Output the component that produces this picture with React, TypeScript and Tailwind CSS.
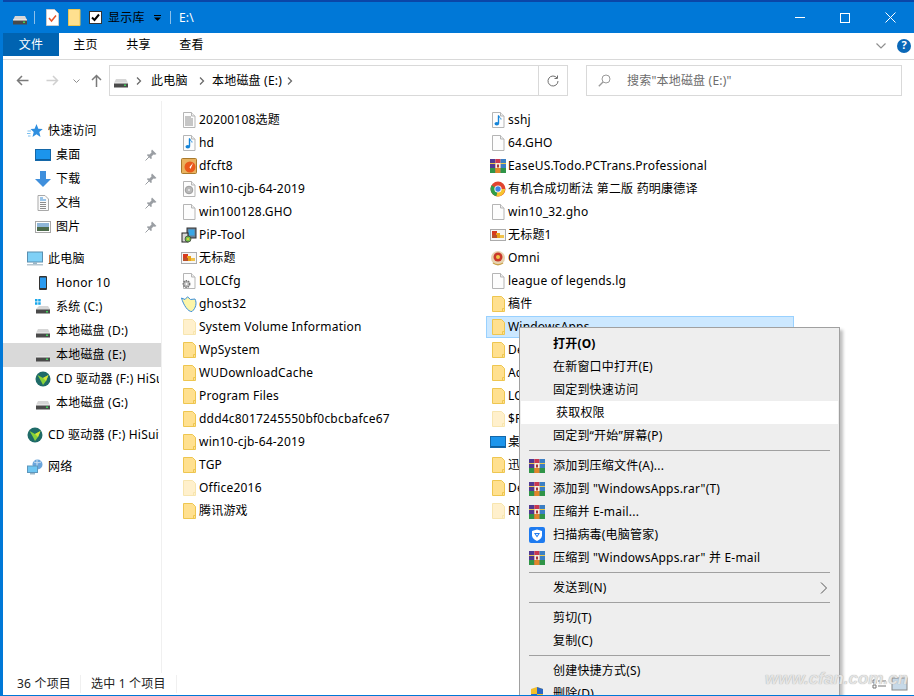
import type { ReactNode } from "react";

const Drive = ({ size = 16 }: { size?: number }) => (
  <svg width={size} height={size} viewBox="0 0 16 16">
    <path d="M3 6h10l2 4v4H1v-4z" fill="#d6d6d6" />
    <rect x="1" y="10" width="14" height="4.500" fill="#4a4a4a" />
    <rect x="1" y="9.500" width="14" height="1" fill="#f4f4f4" />
    <rect x="11" y="11.500" width="2" height="1.500" fill="#3fd05a" />
  </svg>
);

const Folder = ({ faded = false }: { faded?: boolean }) => (
  <svg width={16} height={16} viewBox="0 0 16 16" opacity={faded ? 0.45 : 1}>
    <path d="M2.500 .5h9l3 3v12h-12z" fill="#ffe08f" stroke="#eec650" />
    <path d="M12.500 15.500v-3h2" fill="none" stroke="#eec650" />
  </svg>
);

const PageBase = ({ children }: { children?: ReactNode }) => (
  <svg width={16} height={16} viewBox="0 0 16 16">
    <path d="M2.500 .5h8l3.500 3.500v11.500H2.500z" fill="#fdfdfd" stroke="#b5b5b5" />
    <path d="M10.500 .5v3.500H14" fill="#eee" stroke="#b5b5b5" />
    {children}
  </svg>
);

const TextDoc = () => (
  <PageBase>
    <path d="M4 5h6M4 7h8M4 9h8M4 11h8M4 13h8" stroke="#8f8f8f" />
  </PageBase>
);

const MusicDoc = () => (
  <PageBase>
    <path d="M8.500 3.500v8" stroke="#1584d8" strokeWidth="1.400" />
    <path d="M8.500 3.500c.5 2 2.500 2 2.500 4" stroke="#1584d8" fill="none" />
    <ellipse cx="6.800" cy="11.700" rx="2.300" ry="1.800" fill="#1584d8" />
  </PageBase>
);

const DiscDoc = () => (
  <PageBase>
    <circle cx="8" cy="9" r="3.800" fill="#b9b9b9" stroke="#9d9d9d" />
    <circle cx="8" cy="9" r="1" fill="#eee" />
  </PageBase>
);

const GearDoc = () => (
  <PageBase>
    <circle cx="5.500" cy="11" r="3.200" fill="#bbb" stroke="#777" strokeDasharray="1.500 .8" strokeWidth="1.500" />
    <circle cx="5.500" cy="11" r="1" fill="#fff" />
  </PageBase>
);

const PictureIcon = () => (
  <svg width={16} height={16} viewBox="0 0 16 16">
    <rect x=".5" y="2.500" width="15" height="11" fill="#f6f6f6" stroke="#ababab" />
    <rect x="2" y="4" width="5" height="4" fill="#d63a1e" />
    <rect x="6" y="6" width="4" height="5" fill="#e8a21d" />
    <rect x="2" y="8" width="5" height="3" fill="#b9502a" />
    <rect x="10" y="8" width="4" height="3" fill="#f0c24a" />
  </svg>
);

const BoxApp = () => (
  <svg width={16} height={16} viewBox="0 0 16 16">
    <rect x=".5" y=".5" width="15" height="15" rx="1" fill="#e9b25f" stroke="#a97a2c" />
    <circle cx="9" cy="9" r="5.500" fill="#ea5a1c" />
    <path d="M6 12 12 5 9.500 11 8.500 9z" fill="#fff" />
  </svg>
);

const Installer = () => (
  <svg width={16} height={16} viewBox="0 0 16 16">
    <rect x="6" y="1" width="9" height="10" fill="#6d7f93" stroke="#333" />
    <rect x="7.500" y="2.500" width="6" height="6" fill="#39a7e6" />
    <rect x="1" y="6" width="6" height="9" fill="#d8d8d8" stroke="#222" />
    <circle cx="7" cy="12" r="3" fill="#78c24a" stroke="#333" strokeWidth=".7" />
    <circle cx="7" cy="12" r="1" fill="#f3d13c" />
  </svg>
);

const Ghost = () => (
  <svg width={16} height={16} viewBox="0 0 16 16">
    <path d="M.5 2 4 3.500 6.500 .8 9.500 3.500 14 3c2 4 1 9-3 12.500C7 16 2.500 9 .5 2z" fill="#fcf5a8" stroke="#3b8fd8" />
  </svg>
);

const WinRar = () => (
  <svg width={16} height={16} viewBox="0 0 16 16">
    <rect x="0" y="1" width="5.400" height="14" fill="#4f3a92" />
    <rect x="5.400" y="1" width="5.200" height="14" fill="#c9384f" />
    <rect x="10.600" y="1" width="5.400" height="14" fill="#3b7fc4" />
    <rect x="0" y="10" width="5.400" height="5" fill="#2f9447" />
    <rect x="5.400" y="10" width="5.200" height="5" fill="#e0862a" />
    <rect x="10.600" y="10" width="5.400" height="5" fill="#2f9447" />
    <rect x="0" y="5" width="16" height="1" fill="#e9c84e" />
    <rect x="5.500" y="5" width="5" height="5" fill="#f4f0e2" />
    <rect x="7" y="6.500" width="2" height="3" fill="#a33" />
  </svg>
);

const ChromeIcon = () => (
  <svg width={16} height={16} viewBox="0 0 16 16">
    <circle cx="8" cy="8" r="7.500" fill="#e0442f" />
    <path d="M8 8 1.500 4.200A7.500 7.500 0 0 0 6.500 15.300z" fill="#2f9e49" />
    <path d="M8 8h7.200a7.500 7.500 0 0 1-8.700 7.300z" fill="#f6c42e" />
    <circle cx="8" cy="8" r="3.600" fill="#fff" />
    <circle cx="8" cy="8" r="2.700" fill="#3b83e6" />
  </svg>
);

const Emblem = () => (
  <svg width={16} height={16} viewBox="0 0 16 16">
    <circle cx="8" cy="8" r="7" fill="#e7d3b0" />
    <circle cx="8" cy="7" r="4.500" fill="#c9382a" />
    <circle cx="8" cy="7" r="2" fill="#f1c64a" />
    <path d="M3 13c3 2 7 2 10 0" stroke="#c9a24a" strokeWidth="1.500" fill="none" />
  </svg>
);

const DesktopIcon = () => (
  <svg width={16} height={16} viewBox="0 0 16 16">
    <rect x=".5" y="2.500" width="15" height="11" fill="#1c95ec" stroke="#1467a8" />
    <rect x="1" y="12" width="14" height="1" fill="#0e5f9e" />
  </svg>
);

const DownloadIcon = () => (
  <svg width={16} height={16} viewBox="0 0 16 16">
    <path d="M5 0h6v8h5l-8 8-8-8h5z" fill="#3f8fdc" />
  </svg>
);

const DocsIcon = () => (
  <svg width={16} height={16} viewBox="0 0 16 16">
    <path d="M3 .5h7l3.500 3.500v11.500H3z" fill="#fafafa" stroke="#a9a9a9" />
    <path d="M5 3h3M5 5h6" stroke="#3b8fd8" />
    <path d="M5 7.500h6M5 9.500h6M5 11.500h6M5 13.500h6" stroke="#8c8c8c" />
  </svg>
);

const PicturesIcon = () => (
  <svg width={16} height={16} viewBox="0 0 16 16">
    <rect x=".5" y="2.500" width="15" height="11" fill="#fff" stroke="#a8a8a8" />
    <rect x="2" y="4" width="12" height="4" fill="#8fb6d8" />
    <rect x="2" y="8" width="12" height="4" fill="#4d6b4b" />
  </svg>
);

const StarIcon = () => (
  <svg width={16} height={16} viewBox="0 0 16 16">
    <path d="M9.500 1 11.300 5.800 15.800 6 12.300 9 13.500 14 9.500 11.200 5.500 14 6.700 9 3.500 6 7.600 5.800z" fill="#2f8fe0" />
    <path d="M.5 8H4M0 10.500h3.500M1 13h2.500" stroke="#7cc0ef" />
  </svg>
);

const ComputerIcon = () => (
  <svg width={16} height={16} viewBox="0 0 16 16">
    <rect x=".5" y="1" width="15" height="10" fill="#7fd0f6" stroke="#5a8fb0" />
    <rect x="6" y="11" width="4" height="2" fill="#9ab7c8" />
    <rect x="0" y="13" width="16" height="1.500" fill="#b6c6d0" />
  </svg>
);

const PhoneIcon = () => (
  <svg width={16} height={16} viewBox="0 0 16 16">
    <rect x="4" y="1" width="8" height="14" rx="1" fill="#333" />
    <rect x="5" y="2.500" width="6" height="10.500" fill="#2a9bf0" />
  </svg>
);

const SystemDrive = () => (
  <svg width={16} height={16} viewBox="0 0 16 16">
    <path d="M4 7h9l2 3v4H1v-4z" fill="#d6d6d6" />
    <rect x="1" y="10.500" width="14" height="4" fill="#4a4a4a" />
    <rect x="11" y="12" width="2" height="1.500" fill="#3fd05a" />
    <path d="M0 0h2.500v2.500H0zM3.200 0h2.500v2.500H3.200zM0 3.200h2.500v2.500H0zM3.200 3.200h2.500v2.500H3.200z" fill="#19a7ea" />
  </svg>
);

const CdIcon = () => (
  <svg width={16} height={16} viewBox="0 0 16 16">
    <circle cx="8" cy="8" r="7.500" fill="#1f6b68" />
    <path d="M2.500 4 8 7l5.500-3L11 10l-3 4-2-4z" fill="#86d23a" />
    <path d="M8 7l5.500-3L11 10z" fill="#d6e338" />
  </svg>
);

const NetworkIcon = () => (
  <svg width={16} height={16} viewBox="0 0 16 16">
    <circle cx="10.500" cy="5.500" r="5" fill="#6ba6dc" />
    <path d="M7 3c2 1 5 1 7 0M10 .5v10" stroke="#cfe2f3" fill="none" />
    <rect x=".5" y="7" width="10" height="6.500" fill="#6fc6f2" stroke="#5e97bc" />
    <rect x="3" y="14" width="5" height="1.500" fill="#9fb8c8" />
  </svg>
);

const PinIcon = () => (
  <svg width={12} height={12} viewBox="0 0 12 12">
    <path d="M7 .5 11.500 5 10 5.800 8.500 5.500 6.500 7.500 6.800 9.500 5.800 10 2 6.200 2.500 5.200 4.500 5.500 6.500 3.500 6.200 2z" fill="#9a9ea3" />
    <path d="M4 8 .5 11.500" stroke="#9a9ea3" />
  </svg>
);

const TencentShield = () => (
  <svg width={16} height={16} viewBox="0 0 16 16">
    <rect width="16" height="16" rx="2" fill="#1e7bf0" />
    <path d="M8 2.500 13 4v4.500C13 11 10.500 13 8 14 5.500 13 3 11 3 8.500V4z" fill="#fff" />
    <path d="M5 6h6L8 10.500z" fill="#1e7bf0" />
    <path d="M6.800 7h2.400L8 8.800z" fill="#fff" />
  </svg>
);

const UacShield = () => (
  <svg width={16} height={16} viewBox="0 0 16 16">
    <path d="M8 1 14 3v5c0 3.500-3 6-6 7V8H2V3z" fill="#f4bf2a" />
    <path d="M8 1v7h6V3zM2 8h6v7C5 14 2 11.500 2 8z" fill="#2b67c4" />
  </svg>
);

type Entry = { name: string; icon: ReactNode };

const leftColumn: Entry[] = [
  { name: "20200108选题", icon: <TextDoc /> },
  { name: "hd", icon: <MusicDoc /> },
  { name: "dfcft8", icon: <BoxApp /> },
  { name: "win10-cjb-64-2019", icon: <DiscDoc /> },
  { name: "win100128.GHO", icon: <PageBase /> },
  { name: "PiP-Tool", icon: <Installer /> },
  { name: "无标题", icon: <PictureIcon /> },
  { name: "LOLCfg", icon: <GearDoc /> },
  { name: "ghost32", icon: <Ghost /> },
  { name: "System Volume Information", icon: <Folder faded /> },
  { name: "WpSystem", icon: <Folder /> },
  { name: "WUDownloadCache", icon: <Folder /> },
  { name: "Program Files", icon: <Folder /> },
  { name: "ddd4c8017245550bf0cbcbafce67", icon: <Folder /> },
  { name: "win10-cjb-64-2019", icon: <Folder /> },
  { name: "TGP", icon: <Folder /> },
  { name: "Office2016", icon: <Folder faded /> },
  { name: "腾讯游戏", icon: <Folder /> },
];

// names in the lower half are cut off by the context menu
const rightColumn: Entry[] = [
  { name: "sshj", icon: <MusicDoc /> },
  { name: "64.GHO", icon: <PageBase /> },
  { name: "EaseUS.Todo.PCTrans.Professional", icon: <WinRar /> },
  { name: "有机合成切断法 第二版 药明康德译", icon: <ChromeIcon /> },
  { name: "win10_32.gho", icon: <PageBase /> },
  { name: "无标题1", icon: <PictureIcon /> },
  { name: "Omni", icon: <Emblem /> },
  { name: "league of legends.lg", icon: <PageBase /> },
  { name: "稿件", icon: <Folder /> },
  { name: "WindowsApps", icon: <Folder /> },
  { name: "De", icon: <Folder /> },
  { name: "Ac", icon: <Folder /> },
  { name: "LO", icon: <Folder /> },
  { name: "$R", icon: <Folder faded /> },
  { name: "桌", icon: <DesktopIcon /> },
  { name: "迅", icon: <Folder /> },
  { name: "De", icon: <Folder /> },
  { name: "RI", icon: <Folder faded /> },
];

const FileRow = ({ item, selected }: { item: Entry; selected: boolean }) => (
  <div
    className={`flex h-[22px] mb-px items-center gap-[2px] pl-[3px] border ${
      selected ? "bg-[#cce8ff] border-[#99d1ff]" : "border-transparent"
    }`}
  >
    <span className="w-4 h-4 shrink-0">{item.icon}</span>
    <span className="whitespace-nowrap">{item.name}</span>
  </div>
);

const NavRow = ({
  icon,
  label,
  child = false,
  pinned = false,
  active = false,
  gap = false,
}: {
  icon: ReactNode;
  label: string;
  child?: boolean;
  pinned?: boolean;
  active?: boolean;
  gap?: boolean;
}) => (
  <div
    className={`flex h-6 items-center gap-[5px] overflow-hidden ${pinned ? "pr-1" : "pr-[2px]"} ${
      child ? "pl-[32px]" : "pl-6"
    } ${gap ? "mt-2" : ""} ${active ? "bg-[#d9d9d9]" : ""}`}
  >
    <span className="w-4 h-4 shrink-0">{icon}</span>
    <span className="flex-1 whitespace-nowrap overflow-hidden">{label}</span>
    {pinned && <PinIcon />}
  </div>
);

const MenuItem = ({
  label,
  icon,
  bold = false,
  hot = false,
  arrow = false,
}: {
  label: string;
  icon?: ReactNode;
  bold?: boolean;
  hot?: boolean;
  arrow?: boolean;
}) => (
  <div className={`flex h-[23px] items-center mx-px ${hot ? "bg-white" : ""}`}>
    <span className="w-8 pl-2 shrink-0 flex">{icon}</span>
    <span className={`flex-1 whitespace-nowrap ${bold ? "font-bold" : ""} ${hot ? "pl-[3px]" : ""}`}>{label}</span>
    {arrow && (
      <svg width={8} height={12} viewBox="0 0 8 12" className="mr-[10px]">
        <path d="M1 .5 6.500 6 1 11.500" fill="none" stroke="#555" />
      </svg>
    )}
  </div>
);

const MenuLine = () => (
  <div className="h-[7px] flex items-center px-[9px]">
    <div className="h-px w-full bg-[#a0a0a0]" />
  </div>
);

const Crumb = () => (
  <svg width={6} height={10} viewBox="0 0 6 10">
    <path d="M1 1.500 4.500 5 1 8.500" fill="none" stroke="#6b6b6b" strokeWidth="1.300" />
  </svg>
);

const App = () => {
  return (
    <div
      className="relative w-[914px] h-[696px] overflow-hidden bg-white border-l-[3px] border-b border-[#0078d7] flex flex-col text-[12px] tracking-[0.2px] text-black"
      style={{ fontFamily: '"Noto Sans", "Noto Sans CJK SC", sans-serif' }}
    >
      {/* Title bar */}
      <div className="h-[33px] shrink-0 bg-[#0078d7] border-t-2 border-[#0a46a8] flex items-center pl-[9px]">
        <Drive />
        <span className="w-px h-[13px] bg-[#8cc0ea] ml-[6px]" />
        <svg width={13} height={17} viewBox="0 0 13 17" className="ml-[11px]">
          <path d="M.5.500h8l4 4v12H.500z" fill="#fff" stroke="#ccc" />
          <path d="M3 9l2.500 3L10 6.500" fill="none" stroke="#e8542a" strokeWidth="1.500" />
        </svg>
        <svg width={13} height={17} viewBox="0 0 13 17" className="ml-[9px]">
          <path d="M.5.500h11.500v16H.500z" fill="#ffe08f" stroke="#eec650" />
        </svg>
        <span className="ml-2 w-[13px] h-[13px] bg-white border border-[#333] flex items-center justify-center">
          <svg width={9} height={9} viewBox="0 0 9 9">
            <path d="M1 4.500 3.500 7 8 1.500" fill="none" stroke="#000" strokeWidth="2" />
          </svg>
        </span>
        <span className="ml-[6px] w-[45px] pt-px whitespace-nowrap">显示库</span>
        <svg width={7} height={6} viewBox="0 0 7 6" className="ml-[1px] mr-px">
          <path d="M0 .5h7" stroke="#000" />
          <path d="M0 2.500h7L3.500 6z" fill="#000" />
        </svg>
        <span className="w-px h-[13px] bg-[#8cc0ea] ml-2" />
        <span className="ml-2 pt-px text-white">E:\</span>
        <div className="flex-1" />
        <div className="flex items-center mr-[18px] gap-[35px] text-white">
          <span className="w-[10px] h-px bg-white" />
          <span className="w-[10px] h-[10px] border border-white" />
          <svg width={11} height={11} viewBox="0 0 11 11">
            <path d="M.5.500l10 10M10.500.500l-10 10" stroke="#fff" />
          </svg>
        </div>
      </div>

      {/* Ribbon tabs */}
      <div className="h-[27px] shrink-0 border-b border-[#d9d9d9] flex items-start relative">
        <div className="w-14 h-[23px] pt-px bg-[#0063b1] text-white flex items-center justify-center">文件</div>
        <div className="w-[53px] h-[23px] pt-px flex items-center justify-center">主页</div>
        <div className="w-[53px] h-[23px] pt-px flex items-center justify-center">共享</div>
        <div className="w-[53px] h-[23px] pt-px flex items-center justify-center">查看</div>
        <div className="flex-1" />
        <div className="flex items-center h-[27px] mr-[3px] gap-[11px] pb-[2px]">
          <svg width={10} height={6} viewBox="0 0 10 6">
            <path d="M.5.500 5 5 9.500.500" fill="none" stroke="#8f8f8f" strokeWidth="1.200" />
          </svg>
          <span className="w-[14px] h-[14px] rounded-full bg-[#0a68b8] text-white text-[11px] font-bold flex items-center justify-center tracking-normal">
            ?
          </span>
        </div>
      </div>

      {/* Address row */}
      <div className="h-[36px] shrink-0 flex items-end">
        <div className="w-[106px] h-[31px] flex items-center pl-[13px] shrink-0">
          <svg width={13} height={11} viewBox="0 0 13 11">
            <path d="M12.500 5.500H1.500M6 1 1.500 5.500 6 10" fill="none" stroke="#7a7a7a" strokeWidth="1.500" />
          </svg>
          <svg width={13} height={11} viewBox="0 0 13 11" className="ml-[17px]">
            <path d="M.5 5.500h11M7 1l4.500 4.500L7 10" fill="none" stroke="#d0d0d0" strokeWidth="1.500" />
          </svg>
          <svg width={7} height={4} viewBox="0 0 7 4" className="ml-[14px]">
            <path d="M.5.500 3.500 3.500 6.500.500" fill="none" stroke="#8f8f8f" />
          </svg>
          <svg width={11} height={13} viewBox="0 0 11 13" className="ml-[11px]">
            <path d="M5.500 13V1.500M1 6l4.500-4.500L10 6" fill="none" stroke="#7a7a7a" strokeWidth="1.500" />
          </svg>
        </div>
        <div className="w-[459px] h-[31px] border border-[#d9d9d9] flex items-center shrink-0 pl-[3px]">
          <Drive />
          <span className="ml-[7px]"><Crumb /></span>
          <span className="ml-[9px] w-[48px] whitespace-nowrap">此电脑</span>
          <Crumb />
          <span className="ml-[7px] w-[75px] whitespace-nowrap">本地磁盘 (E:)</span>
          <Crumb />
          <div className="flex-1" />
          <div className="w-[29px] h-full border-l border-[#d9d9d9] flex items-center justify-center">
            <svg width={12} height={12} viewBox="0 0 12 12">
              <path d="M10 3A5 5 0 1 0 11 6M10.500 .5V3.500H7.500" fill="none" stroke="#6f6f6f" />
            </svg>
          </div>
        </div>
        <div className="w-[316px] h-[31px] ml-[18px] border border-[#d9d9d9] flex items-center pl-[11px] shrink-0 text-[#6d6d6d]">
          <svg width={13} height={13} viewBox="0 0 13 13" className="mr-4">
            <circle cx="8" cy="5" r="4" fill="none" stroke="#9a9a9a" />
            <path d="M5 8 .8 12.200" stroke="#9a9a9a" strokeWidth="1.300" />
          </svg>
          <span>搜索"本地磁盘 (E:)"</span>
        </div>
      </div>

      {/* Main area */}
      <div className="flex-1 min-h-0 flex mt-[5px]">
        <div className="w-[158px] shrink-0 pt-[18px]">
          <NavRow icon={<StarIcon />} label="快速访问" />
          <NavRow child pinned icon={<DesktopIcon />} label="桌面" />
          <NavRow child pinned icon={<DownloadIcon />} label="下载" />
          <NavRow child pinned icon={<DocsIcon />} label="文档" />
          <NavRow child pinned icon={<PicturesIcon />} label="图片" />
          <NavRow gap icon={<ComputerIcon />} label="此电脑" />
          <NavRow child icon={<PhoneIcon />} label="Honor 10" />
          <NavRow child icon={<SystemDrive />} label="系统 (C:)" />
          <NavRow child icon={<Drive />} label="本地磁盘 (D:)" />
          <NavRow child active icon={<Drive />} label="本地磁盘 (E:)" />
          <NavRow child icon={<CdIcon />} label="CD 驱动器 (F:) HiSuite" />
          <NavRow child icon={<Drive />} label="本地磁盘 (G:)" />
          <NavRow gap icon={<CdIcon />} label="CD 驱动器 (F:) HiSuite" />
          <NavRow gap icon={<NetworkIcon />} label="网络" />
        </div>
        <div className="w-px bg-[#f0f0f0] shrink-0" />
        <div className="flex-1 min-w-0 flex pt-[8px] pl-[15px]">
          <div className="w-[309px] shrink-0">
            {leftColumn.map((item, i) => (
              <FileRow key={i} item={item} selected={false} />
            ))}
          </div>
          <div className="w-[308px] shrink-0">
            {rightColumn.map((item, i) => (
              <FileRow key={i} item={item} selected={item.name === "WindowsApps"} />
            ))}
          </div>
        </div>
      </div>

      {/* Status bar */}
      <div className="h-[22px] shrink-0 flex items-center text-[#222]">
        <span className="pl-[14px] w-[78px] whitespace-nowrap border-r border-[#f0f0f0]">36 个项目</span>
        <span className="pl-[10px] w-[96px] whitespace-nowrap border-r border-[#f0f0f0]">选中 1 个项目</span>
        <div className="flex-1" />
        <svg width={36} height={14} viewBox="0 0 36 14" className="mr-[6px]">
          <path d="M1 3h3v3H1zM1 8h3v3H1zM6 4h8M6 9h8" fill="none" stroke="#777" />
          <rect x="20" y="1" width="15" height="12" fill="#c7d9e8" stroke="#888" />
        </svg>
      </div>

      {/* Context menu */}
      <div className="absolute left-[516px] top-[327px] w-[321px] h-[372px] bg-[#eeeeee] border border-[#a0a0a0] pt-[4px] shadow-[3px_3px_3px_rgba(0,0,0,0.25)]">
        <MenuItem bold label="打开(O)" />
        <MenuItem label="在新窗口中打开(E)" />
        <MenuItem label="固定到快速访问" />
        <MenuItem hot label="获取权限" />
        <MenuItem label="固定到“开始”屏幕(P)" />
        <MenuLine />
        <MenuItem icon={<WinRar />} label="添加到压缩文件(A)..." />
        <MenuItem icon={<WinRar />} label='添加到 "WindowsApps.rar"(T)' />
        <MenuItem icon={<WinRar />} label="压缩并 E-mail..." />
        <MenuItem icon={<TencentShield />} label="扫描病毒(电脑管家)" />
        <MenuItem icon={<WinRar />} label='压缩到 "WindowsApps.rar" 并 E-mail' />
        <MenuLine />
        <MenuItem arrow label="发送到(N)" />
        <MenuLine />
        <MenuItem label="剪切(T)" />
        <MenuItem label="复制(C)" />
        <MenuLine />
        <MenuItem label="创建快捷方式(S)" />
        <MenuItem icon={<UacShield />} label="删除(D)" />
      </div>

      {/* Watermark */}
      <div
        className="absolute right-[6px] bottom-[4px] italic font-bold text-[17px] tracking-normal text-[#e4e4e4] [text-shadow:0_0_1px_#9a9a9a]"
        style={{ fontFamily: '"Liberation Sans", sans-serif' }}
      >
        www.cfan.com.cn
      </div>
    </div>
  );
};

export default App;
